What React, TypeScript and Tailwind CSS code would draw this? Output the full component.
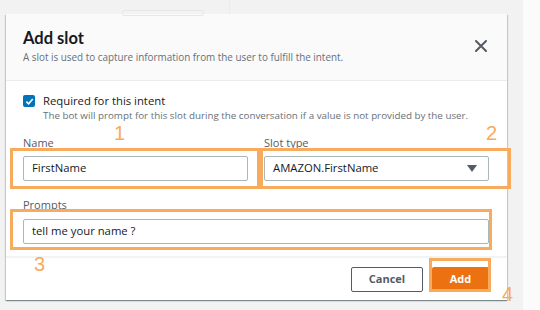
import React from "react";

const font = { fontFamily: '"Open Sans", "Noto Sans", Arial, sans-serif' };

export default function App() {
  return (
    <div className="relative w-[540px] h-[310px] overflow-hidden bg-[#f2f2f2]" style={font}>
      {/* right pale strip */}
      <div className="absolute right-0 top-0 h-full w-[17px] bg-[#fbfbfb]" />
      {/* faint background element behind modal */}
      <div className="absolute left-[122px] top-[10px] w-[82px] h-[6px] border border-[#e8e8e8] rounded-[2px]" />
      <div className="absolute left-[229px] top-0 w-px h-[14px] bg-[#ebebeb]" />

      <div className="pl-[6px] pt-[14px]">
        <div className="w-[501px] h-[286px] bg-white flex flex-col shadow-[0_1px_1px_0_rgba(0,28,36,0.3),1px_1px_1px_0_rgba(0,28,36,0.15),-1px_1px_1px_0_rgba(0,28,36,0.15)]">
          {/* header */}
          <div className="h-[67px] bg-[#fafafa] border-b border-[#eaeded] pl-[17px] pr-[20px] pt-[13px] flex justify-between">
            <div>
              <div
                className="text-[16.5px] leading-[22px] font-bold text-[#16191f]"
                style={{ fontFamily: 'Lato, "Open Sans", sans-serif' }}
              >
                Add slot
              </div>
              <div className="text-[9.9px] leading-[14px] text-[#687078] mt-[1px]">
                A slot is used to capture information from the user to fulfill the intent.
              </div>
            </div>
            <svg width="12" height="12" viewBox="0 0 12 12" className="mt-[13px]">
              <path d="M1 1 L11 11 M11 1 L1 11" stroke="#545b64" strokeWidth="2" strokeLinecap="round" />
            </svg>
          </div>

          {/* body */}
          <div className="pl-[17px] pr-[18px] pt-[12px] flex-1">
            <div className="flex items-start">
              <div className="w-[12px] h-[12px] mt-[2px] rounded-[2px] bg-[#0073bb] flex items-center justify-center">
                <svg width="9" height="9" viewBox="0 0 10 10">
                  <path d="M1.5 5.2 L4 7.6 L8.6 2.3" stroke="white" strokeWidth="1.8" fill="none" />
                </svg>
              </div>
              <div className="ml-[8px]">
                <div className="text-[11.3px] leading-[16px] text-[#16191f]">Required for this intent</div>
                <div className="text-[9.8px] leading-[14px] text-[#687078]">
                  The bot will prompt for this slot during the conversation if a value is not provided by the user.
                </div>
              </div>
            </div>

            <div className="grid grid-cols-2 gap-x-[16px] mt-[13px]">
              <div>
                <div className="text-[11px] leading-[14px] text-[#545b64]">Name</div>
                <div className="mt-[6px] h-[25px] border border-[#aab7b8] rounded-[2px] pl-[8px] flex items-center text-[11.3px] text-[#16191f]">
                  FirstName
                </div>
              </div>
              <div>
                <div className="text-[11px] leading-[14px] text-[#545b64]">Slot type</div>
                <div className="mt-[6px] h-[25px] border border-[#aab7b8] rounded-[2px] pl-[8px] pr-[11px] flex items-center justify-between text-[11.3px] text-[#16191f]">
                  <span>AMAZON.FirstName</span>
                  <svg width="10" height="7" viewBox="0 0 10 7">
                    <path d="M0 0 H10 L5 7 Z" fill="#545b64" />
                  </svg>
                </div>
              </div>
            </div>

            <div className="mt-[17px]">
              <div className="text-[11px] leading-[14px] text-[#545b64]">Prompts</div>
              <div className="mt-[7px] h-[25px] border border-[#aab7b8] rounded-[2px] pl-[8px] flex items-center text-[11.3px] text-[#16191f]">
                tell me your name ?
              </div>
            </div>
          </div>

          {/* footer */}
          <div className="h-[44px] border-t-2 border-[#f2f3f3] flex items-center justify-end pr-[18px] gap-[9px]">
            <button className="w-[72px] h-[25px] border border-[#545b64] rounded-[2px] bg-white text-[11px] font-bold text-[#545b64]">
              Cancel
            </button>
            <button className="w-[57px] h-[24px] rounded-[2px] bg-[#ec7211] text-[11px] font-bold text-white">
              Add
            </button>
          </div>
        </div>
      </div>

      {/* annotations */}
      <div className="absolute left-[10px] top-[148px] w-[250px] h-[41px] border-[3px] border-[#f8ab5c]" />
      <div className="absolute left-[260px] top-[148px] w-[251px] h-[41px] border-[3px] border-[#f8ab5c]" />
      <div className="absolute left-[10px] top-[209px] w-[482px] h-[41px] border-[3px] border-[#f8ab5c]" />
      <div className="absolute left-[429px] top-[258px] w-[62px] h-[34px] border-[3px] border-[#f8ab5c]" />
      <div className="absolute left-[114px] top-[121px] text-[20px] leading-[24px] text-[#f8ab5c]" style={{ fontFamily: '"Liberation Sans", Arial, sans-serif' }}>1</div>
      <div className="absolute left-[486px] top-[121px] text-[20px] leading-[24px] text-[#f8ab5c]" style={{ fontFamily: '"Liberation Sans", Arial, sans-serif' }}>2</div>
      <div className="absolute left-[34px] top-[252px] text-[20px] leading-[24px] text-[#f8ab5c]" style={{ fontFamily: '"Liberation Sans", Arial, sans-serif' }}>3</div>
      <div className="absolute left-[502px] top-[282px] text-[20px] leading-[24px] text-[#f8ab5c]" style={{ fontFamily: '"Liberation Sans", Arial, sans-serif' }}>4</div>
    </div>
  );
}
